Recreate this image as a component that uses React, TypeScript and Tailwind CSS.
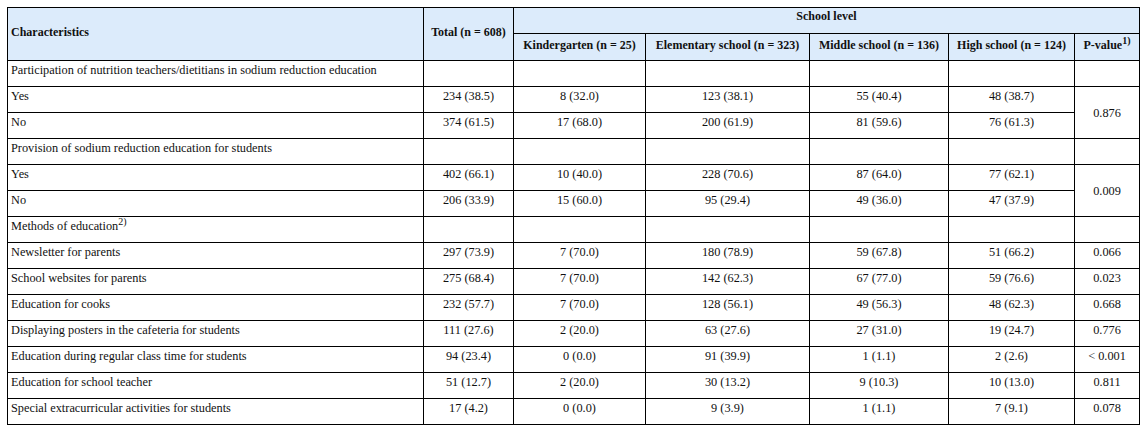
import React from 'react';

type Row = {
  label: React.ReactNode;
  values?: string[];
  p?: string;
  pSpan?: number;
  skipP?: boolean;
};

const rows: Row[] = [
  { label: 'Participation of nutrition teachers/dietitians in sodium reduction education' },
  { label: 'Yes', values: ['234 (38.5)', '8 (32.0)', '123 (38.1)', '55 (40.4)', '48 (38.7)'], p: '0.876', pSpan: 2 },
  { label: 'No', values: ['374 (61.5)', '17 (68.0)', '200 (61.9)', '81 (59.6)', '76 (61.3)'], skipP: true },
  { label: 'Provision of sodium reduction education for students' },
  { label: 'Yes', values: ['402 (66.1)', '10 (40.0)', '228 (70.6)', '87 (64.0)', '77 (62.1)'], p: '0.009', pSpan: 2 },
  { label: 'No', values: ['206 (33.9)', '15 (60.0)', '95 (29.4)', '49 (36.0)', '47 (37.9)'], skipP: true },
  {
    label: (
      <>
        Methods of education<sup className="text-[10px]">2)</sup>
      </>
    ),
  },
  { label: 'Newsletter for parents', values: ['297 (73.9)', '7 (70.0)', '180 (78.9)', '59 (67.8)', '51 (66.2)'], p: '0.066' },
  { label: 'School websites for parents', values: ['275 (68.4)', '7 (70.0)', '142 (62.3)', '67 (77.0)', '59 (76.6)'], p: '0.023' },
  { label: 'Education for cooks', values: ['232 (57.7)', '7 (70.0)', '128 (56.1)', '49 (56.3)', '48 (62.3)'], p: '0.668' },
  { label: 'Displaying posters in the cafeteria for students', values: ['111 (27.6)', '2 (20.0)', '63 (27.6)', '27 (31.0)', '19 (24.7)'], p: '0.776' },
  { label: 'Education during regular class time for students', values: ['94 (23.4)', '0 (0.0)', '91 (39.9)', '1 (1.1)', '2 (2.6)'], p: '< 0.001' },
  { label: 'Education for school teacher', values: ['51 (12.7)', '2 (20.0)', '30 (13.2)', '9 (10.3)', '10 (13.0)'], p: '0.811' },
  { label: 'Special extracurricular activities for students', values: ['17 (4.2)', '0 (0.0)', '9 (3.9)', '1 (1.1)', '7 (9.1)'], p: '0.078' },
];

const cell = 'border border-black px-[3px] text-[12.3px]';
const td = `${cell} align-top pt-[2px]`;
const head = 'border border-black px-[3px] bg-[#dcebfb] font-bold text-[12px]';
const sub = `${head} whitespace-nowrap pb-[4px] text-center align-middle`;

export default function App() {
  return (
    <div className="bg-white pl-[7px] pt-[7px] font-[family-name:Liberation_Serif,Times_New_Roman,serif] text-[12px] leading-[14px] text-[#111]">
      <table className="w-[1132px] table-fixed border-collapse">
        <colgroup>
          <col className="w-[416px]" />
          <col className="w-[90px]" />
          <col className="w-[132px]" />
          <col className="w-[164px]" />
          <col className="w-[139px]" />
          <col className="w-[126px]" />
          <col className="w-[65px]" />
        </colgroup>
        <thead>
          <tr className="h-[26px]">
            <th rowSpan={2} className={`${head} pb-[5px] text-left align-middle`}>
              Characteristics
            </th>
            <th rowSpan={2} className={`${head} whitespace-nowrap pb-[5px] text-center align-middle`}>
              Total (n = 608)
            </th>
            <th colSpan={5} className={`${head} pt-[1px] text-center align-top`}>
              School level
            </th>
          </tr>
          <tr className="h-[27px]">
            <th className={sub}>Kindergarten (n = 25)</th>
            <th className={sub}>Elementary school (n = 323)</th>
            <th className={sub}>Middle school (n = 136)</th>
            <th className={sub}>High school (n = 124)</th>
            <th className={sub}>
              P-value<sup className="text-[10px]">1)</sup>
            </th>
          </tr>
        </thead>
        <tbody>
          {rows.map((r, i) => (
            <tr key={i} className="h-[26px]">
              <td className={`${td} text-left`}>{r.label}</td>
              {r.values
                ? r.values.map((v, j) => (
                    <td key={j} className={`${td} text-center`}>
                      {v}
                    </td>
                  ))
                : [0, 1, 2, 3, 4].map((j) => <td key={j} className={td} />)}
              {r.skipP ? null : (
                <td
                  rowSpan={r.pSpan ?? 1}
                  className={`${cell} text-center ${r.pSpan ? 'align-middle' : 'align-top pt-[2px]'}`}
                >
                  {r.p ?? ''}
                </td>
              )}
            </tr>
          ))}
        </tbody>
      </table>
    </div>
  );
}
